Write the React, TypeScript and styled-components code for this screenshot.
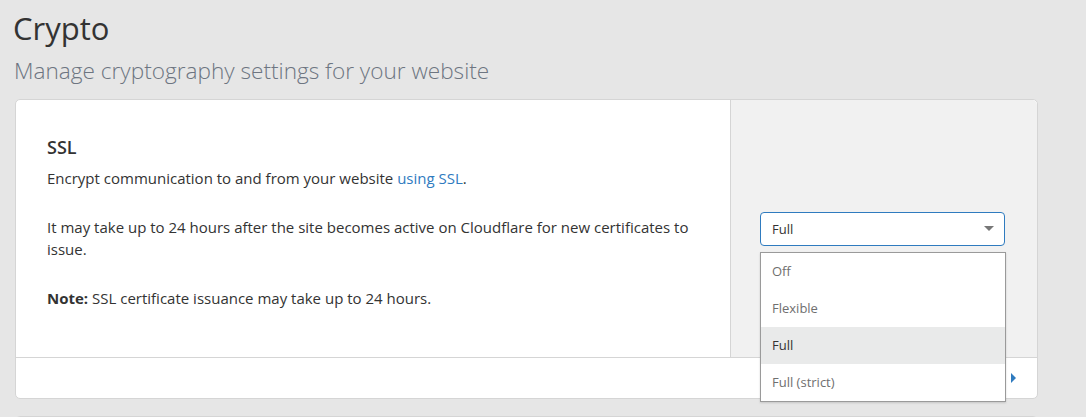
import React from "react";
import styled, { createGlobalStyle } from "styled-components";

const Global = createGlobalStyle`
  html, body { margin: 0; padding: 0; background: #e6e6e6; }
  body { font-family: "Open Sans", "Noto Sans", sans-serif; color: #333; overflow: hidden; }
`;

const Page = styled.div`
  padding: 8px 48px 0 15px;
  height: 417px;
  box-sizing: border-box;
  overflow: hidden;
`;

const Title = styled.h1`
  margin: 0 0 0 -2px;
  font-size: 31px;
  font-weight: 400;
  line-height: 40px;
  color: #333;
`;

const Subtitle = styled.h2`
  margin: 8px 0 13px -1px;
  font-size: 22.6px;
  font-weight: 300;
  line-height: 30px;
  color: #6d7581;
`;

const Card = styled.section`
  background: #fff;
  border: 1px solid #d5d5d5;
  border-radius: 5px;
  margin-bottom: 17px;
`;

const Body = styled.div`
  display: grid;
  grid-template-columns: 715px 1fr;
  min-height: 257px;
  border-bottom: 1px solid #d5d5d5;
`;

const Main = styled.div`
  padding: 33px 20px 20px 31px;
  border-right: 1px solid #d5d5d5;
`;

const Side = styled.div`
  background: #f1f1f1;
  display: flex;
  align-items: center;
  padding: 0 29px 0 29px;
  border-top-right-radius: 5px;
`;

const Heading = styled.h3`
  margin: 0 0 6px;
  font-size: 18px;
  font-weight: 600;
  line-height: 28px;
  color: #333;
`;

const Para = styled.p`
  margin: 0 0 27px;
  font-size: 15px;
  line-height: 22px;
  color: #333;
`;

const Link = styled.a`
  color: #2f7bbf;
  text-decoration: none;
`;

const SelectWrap = styled.div`
  position: relative;
  width: 245px;
`;

const SelectBox = styled.div`
  height: 34px;
  box-sizing: border-box;
  border: 1px solid #2f7bbf;
  border-radius: 4px;
  background: #fff;
  display: flex;
  align-items: center;
  justify-content: space-between;
  padding: 0 10px 0 11px;
  font-size: 13px;
  color: #333;
`;

const Caret = styled.span`
  width: 0;
  height: 0;
  border-left: 5px solid transparent;
  border-right: 5px solid transparent;
  border-top: 5px solid #777;
`;

const Menu = styled.ul`
  position: absolute;
  top: 40px;
  left: 0;
  width: 246px;
  box-sizing: border-box;
  margin: 0;
  padding: 0;
  list-style: none;
  background: #fff;
  border: 1px solid #9a9a9a;
  box-shadow: 0 1px 2px rgba(0, 0, 0, 0.15);
  z-index: 5;
`;

const Option = styled.li<{ $active?: boolean }>`
  height: 37px;
  display: flex;
  align-items: center;
  padding: 0 11px;
  font-size: 13px;
  color: ${(p) => (p.$active ? "#333" : "#6f6f6f")};
  background: ${(p) => (p.$active ? "#e9eaea" : "#fff")};
`;

const Footer = styled.div`
  height: 40px;
  display: flex;
  align-items: center;
  justify-content: flex-end;
  padding: 0 21px;
`;

const Arrow = styled.span`
  width: 0;
  height: 0;
  border-top: 5px solid transparent;
  border-bottom: 5px solid transparent;
  border-left: 5px solid #2f7bbf;
`;

export default function App() {
  return (
    <>
      <Global />
      <Page>
        <Title>Crypto</Title>
        <Subtitle>Manage cryptography settings for your website</Subtitle>
        <Card>
          <Body>
            <Main>
              <Heading>SSL</Heading>
              <Para>
                Encrypt communication to and from your website <Link href="#">using SSL</Link>.
              </Para>
              <Para>
                It may take up to 24 hours after the site becomes active on Cloudflare for new certificates to issue.
              </Para>
              <Para>
                <strong>Note:</strong> SSL certificate issuance may take up to 24 hours.
              </Para>
            </Main>
            <Side>
              <SelectWrap>
                <SelectBox>
                  <span>Full</span>
                  <Caret />
                </SelectBox>
                <Menu>
                  <Option>Off</Option>
                  <Option>Flexible</Option>
                  <Option $active>Full</Option>
                  <Option>Full (strict)</Option>
                </Menu>
              </SelectWrap>
            </Side>
          </Body>
          <Footer>
            <Arrow />
          </Footer>
        </Card>
        <Card>
          <Body>
            <Main />
            <Side />
          </Body>
        </Card>
      </Page>
    </>
  );
}
